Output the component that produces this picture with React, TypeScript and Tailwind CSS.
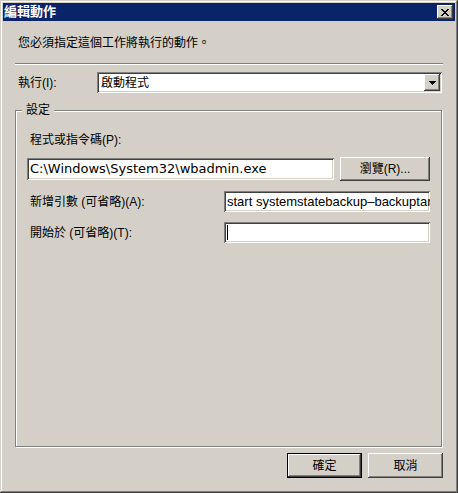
import React from "react";

const raised =
  "shadow-[inset_-1px_-1px_#404040,inset_1px_1px_#ffffff,inset_-2px_-2px_#808080,inset_2px_2px_#d4d0c8]";
const sunken =
  "shadow-[inset_1px_1px_#808080,inset_-1px_-1px_#ffffff,inset_2px_2px_#404040,inset_-2px_-2px_#d4d0c8]";

const uiFont = { fontFamily: '"Liberation Sans", "Noto Sans CJK TC", sans-serif' };
const pathFont = { fontFamily: '"DejaVu Sans", "Noto Sans CJK TC", sans-serif' };
const argsFont = { fontFamily: '"Liberation Sans", "Noto Sans CJK TC", sans-serif' };

function CloseGlyph() {
  const rows = ["11000011", "01100110", "00111100", "00011000", "00111100", "01100110", "11000011"];
  return (
    <svg width="8" height="7" viewBox="0 0 8 7" shapeRendering="crispEdges" aria-hidden="true">
      {rows.map((row, y) =>
        row.split("").map((c, x) => (c === "1" ? <rect key={`${x}-${y}`} x={x} y={y} width="1" height="1" fill="#000" /> : null))
      )}
    </svg>
  );
}

function DownArrow() {
  return (
    <svg width="7" height="4" viewBox="0 0 7 4" shapeRendering="crispEdges" aria-hidden="true">
      <rect x="0" y="0" width="7" height="1" fill="#000" />
      <rect x="1" y="1" width="5" height="1" fill="#000" />
      <rect x="2" y="2" width="3" height="1" fill="#000" />
      <rect x="3" y="3" width="1" height="1" fill="#000" />
    </svg>
  );
}

function TextBox({
  width,
  height,
  font = pathFont,
  children,
}: {
  width: string;
  height: string;
  font?: React.CSSProperties;
  children?: React.ReactNode;
}) {
  return (
    <div
      className={`flex items-center overflow-hidden whitespace-nowrap bg-white pl-[3px] text-[13px] ${width} ${height} ${sunken}`}
      style={font}
    >
      {children}
    </div>
  );
}

export default function App() {
  return (
    <div
      className="flex h-[493px] w-[458px] flex-col bg-[#d4d0c8] p-[3px] text-black shadow-[inset_-1px_-1px_#404040,inset_1px_1px_#d4d0c8,inset_-2px_-2px_#808080,inset_2px_2px_#ffffff]"
      style={uiFont}
    >
      {/* title bar */}
      <div className="flex h-[18px] items-center justify-between bg-[#0a246a] pl-[1px] pr-[2px]">
        <span className="text-[13px] font-bold leading-[18px] text-white">編輯動作</span>
        <div className={`flex h-[14px] w-[16px] items-center justify-center bg-[#d4d0c8] ${raised}`}>
          <CloseGlyph />
        </div>
      </div>

      <div className="flex flex-1 flex-col px-[12px] text-[12px] leading-[16px]">
        <p className="mt-[14px] pl-[3px]">您必須指定這個工作將執行的動作。</p>
        <div className="mt-[12px] h-[2px] border-b border-t border-b-white border-t-[#808080]" />

        {/* action combo */}
        <div className="mt-[7px] flex h-[21px] items-center">
          <span className="w-[82px] pl-[3px]">執行(I):</span>
          <div className={`flex h-[21px] w-[345px] items-center bg-white pl-[4px] ${sunken}`}>
            <span>啟動程式</span>
            <div className={`ml-auto mr-[2px] flex h-[17px] w-[16px] items-center justify-center bg-[#d4d0c8] ${raised}`}>
              <DownArrow />
            </div>
          </div>
        </div>

        {/* settings group */}
        <div className="relative mt-[17px] h-[337px] w-[427px] border border-[#808080] pl-[11px] pt-[21px] shadow-[inset_1px_1px_#ffffff,1px_1px_#ffffff]">
          <span className="absolute left-[6px] top-[-9px] bg-[#d4d0c8] px-[4px]">設定</span>

          <p className="pl-[3px]">程式或指令碼(P):</p>
          <div className="mt-[9px] flex h-[24px] items-center">
            <TextBox width="w-[307px]" height="h-[22px]">
              {"C:\\Windows\\System32\\wbadmin.exe"}
            </TextBox>
            <div className={`ml-[6px] flex h-[24px] w-[90px] items-center justify-center bg-[#d4d0c8] ${raised}`}>
              瀏覽(R)...
            </div>
          </div>

          <div className="mt-[10px] flex h-[21px] items-center">
            <span className="w-[197px] pl-[3px]">新增引數 (可省略)(A):</span>
            <TextBox width="w-[206px]" height="h-[21px]" font={argsFont}>
              start systemstatebackup–backuptarget:E: –quiet
            </TextBox>
          </div>

          <div className="mt-[10px] flex h-[21px] items-center">
            <span className="w-[197px] pl-[3px]">開始於 (可省略)(T):</span>
            <TextBox width="w-[206px]" height="h-[21px]">
              <span className="h-[15px] w-[1px] bg-black" />
            </TextBox>
          </div>
        </div>

        {/* buttons */}
        <div className="mt-[6px] flex justify-end gap-[6px]">
          <div className="flex h-[25px] w-[75px] items-center justify-center border border-black bg-[#d4d0c8] shadow-[inset_-1px_-1px_#404040,inset_1px_1px_#ffffff,inset_-2px_-2px_#808080]">
            確定
          </div>
          <div className={`flex h-[25px] w-[75px] items-center justify-center bg-[#d4d0c8] ${raised}`}>取消</div>
        </div>
      </div>
    </div>
  );
}
